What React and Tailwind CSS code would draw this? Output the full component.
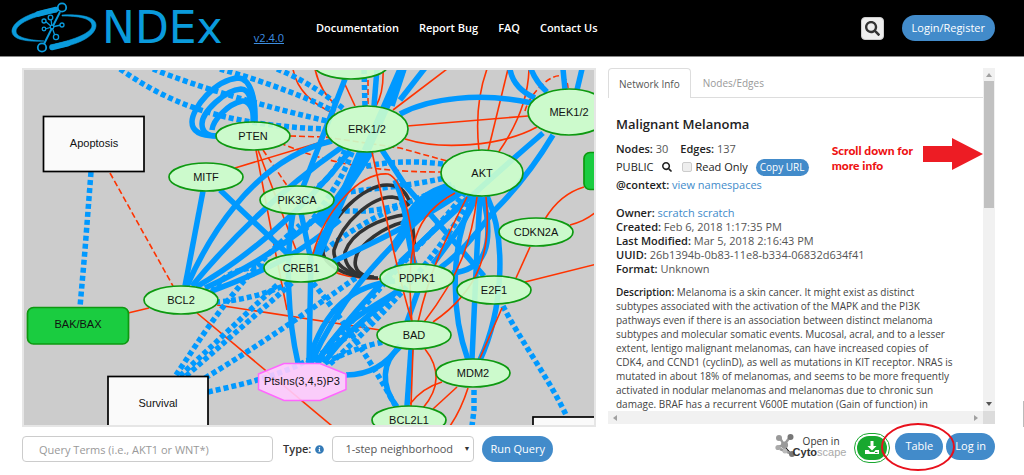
import React from "react";
import { FaSearch, FaInfoCircle } from "react-icons/fa";

const solidEdges = [
  "M255,122 C256,98 250,78 238,78 C215,80 192,108 192,122 C192,134 205,136 217,136",
  "M253,122 C254,105 250,89 241,89 C225,90 202,112 202,124 C202,133 208,136 217,136",
  "M254,122 C254,108 248,100 242,101 C228,104 213,120 212,130",
  "M203,191 L185,286",
  "M220,190 L290,256",
  "M187,286 C205,245 250,160 332,141",
  "M192,286 C230,240 280,190 342,147",
  "M196,287 C240,262 300,215 350,151",
  "M205,288 C240,272 290,245 330,205",
  "M212,291 C250,276 290,262 340,220",
  "M345,79 L303,187",
  "M374,106 L377,69",
  "M400,100 L425,68",
  "M392,106 L404,69",
  "M400,114 C430,98 480,92 532,103",
  "M510,69 Q513,88 535,98",
  "M531,69 Q536,82 547,92",
  "M563,69 L565,90",
  "M582,69 L577,90",
  "M543,133 C500,170 450,215 400,262",
  "M553,135 C535,165 515,190 495,210 C475,235 462,252 440,268",
  "M480,196 L477,250 L472,359",
  "M475,196 C450,240 450,310 468,360",
  "M487,196 C507,240 503,310 480,360",
  "M382,150 L405,185 L484,276",
  "M483,197 C495,245 485,270 452,273",
  "M332,262 C380,240 430,215 462,192",
  "M308,363 C325,305 355,285 395,281",
  "M311,363 C335,310 370,260 452,190",
  "M316,363 C345,320 400,260 470,196",
  "M324,363 C350,325 385,305 398,290",
  "M318,363 C340,318 375,308 402,288",
  "M293,213 C285,260 288,320 298,363",
  "M301,213 L311,260 L309,363",
  "M346,375 Q380,375 400,345",
  "M400,347 C382,362 380,385 397,407",
  "M418,291 L407,322",
  "M411,349 L407,406",
  "M395,180 C410,215 405,240 415,264",
  "M433,264 C455,235 470,215 476,196",
  "M340,210 C330,225 322,240 314,255",
];

const heavyEdges = [
  "M362,151 L317,256",
  "M366,151 L402,69",
  "M370,151 C352,180 335,205 318,225",
  "M456,189 C430,200 415,215 392,250",
  "M452,186 C428,192 414,204 404,226",
];

const dashedEdges = [
  "M91,172 L85,250 L80,307",
  "M120,69 C165,100 215,125 325,129",
  "M153,69 C200,88 270,108 327,121",
  "M220,69 C260,80 310,98 335,112",
  "M277,69 Q310,82 345,110",
  "M364,69 L365,106",
  "M443,164 C410,160 380,162 355,169",
  "M343,193 C370,188 400,188 445,178",
  "M337,210 C365,213 395,212 448,185",
  "M318,255 C350,230 390,205 450,188",
  "M465,192 C435,235 370,290 322,362",
  "M472,196 C442,250 390,310 330,364",
  "M345,150 C335,175 320,185 314,190",
  "M352,152 C342,180 330,195 305,230",
  "M176,375 C200,340 235,280 300,225",
  "M180,376 L278,284",
  "M186,376 L292,283",
  "M205,378 C260,345 310,310 360,275",
  "M208,392 C260,380 320,370 390,300",
  "M215,302 C250,300 275,290 290,283",
  "M212,292 C225,272 240,268 268,266",
  "M503,306 C520,340 550,380 567,417",
  "M474,390 L474,410 L472,426",
  "M313,283 C335,310 365,350 395,405",
  "M325,363 C340,355 365,345 384,342",
];

const redEdges = [
  "M235,168 L328,140",
  "M258,150 L298,255",
  "M256,150 L275,250 L287,310",
  "M293,69 Q298,98 335,114",
  "M315,69 Q320,92 337,106",
  "M342,78 L355,106",
  "M383,69 Q384,92 376,106",
  "M393,110 L447,69",
  "M407,126 L528,116",
  "M405,139 C440,150 500,147 537,127",
  "M487,69 Q474,105 479,151",
  "M508,69 L488,151",
  "M529,69 Q528,110 498,153",
  "M545,219 Q560,194 584,187",
  "M570,225 Q586,221 597,211",
  "M128,313 L149,308",
  "M217,305 L380,330",
  "M197,313 L332,426",
  "M530,247 L516,278",
  "M525,282 L597,264",
  "M335,272 Q350,279 382,279",
  "M425,349 C440,368 440,388 423,408",
  "M442,382 Q422,388 410,404",
  "M457,387 L433,409",
  "M468,388 Q461,410 450,426",
];

const redFrontEdges = [
  "M502,308 L480,358",
  "M455,193 C415,215 405,245 412,322",
  "M467,197 C445,240 430,270 418,322",
  "M477,197 C472,240 460,275 424,322",
  "M486,197 C492,250 480,290 433,322",
  "M372,152 C385,210 396,270 412,322",
  "M313,254 C325,210 360,172 388,174 C405,180 412,230 415,263",
  "M413,349 L411,406",
];

const redDashedEdges = [
  "M290,136 L325,137 L400,148 L447,161",
  "M280,143 C310,155 350,172 441,172",
  "M263,150 L288,187",
  "M525,111 C530,90 566,58 568,88",
  "M110,173 L173,286",
  "M368,80 L368,104",
];

const darkEdges = [
  "M378,278 C340,278 322,262 323,250 C330,215 365,185 387,185 C400,185 405,192 409,200",
  "M374,277 C345,276 333,262 334,250 C343,220 373,197 392,197 C402,198 406,202 409,206",
  "M370,276 C350,276 344,262 345,252 C352,232 378,218 409,214",
  "M366,276 C354,272 353,262 358,252 C370,236 390,224 412,220 L415,250",
];

const ovals = [
  ["", 351, 65, 37, 14],
  ["MITF", 206, 177, 37, 14],
  ["PTEN", 253, 136, 37, 14],
  ["PIK3CA", 297, 200, 37, 14],
  ["ERK1/2", 367, 129, 41, 23],
  ["MEK1/2", 569, 112, 41, 23],
  ["AKT", 482, 173, 41, 23],
  ["CDKN2A", 536, 232, 37, 14],
  ["BCL2", 181, 300, 37, 14],
  ["CREB1", 301, 268, 37, 14],
  ["PDPK1", 417, 278, 37, 14],
  ["E2F1", 494, 290, 37, 14],
  ["BAD", 414, 335, 37, 14],
  ["MDM2", 473, 373, 37, 14],
  ["BCL2L1", 409, 420, 37, 14],
];

function Paths({ list, ...rest }) {
  return (
    <g fill="none" {...rest}>
      {list.map((d) => (
        <path key={d} d={d} />
      ))}
    </g>
  );
}

function NetworkGraph() {
  return (
    <div className="border-2 border-[#e6e6e6] bg-[#cccccc]">
      <svg viewBox="24 70 570 355" className="block h-auto w-full" role="img" aria-label="Network graph">
        <Paths list={redEdges} stroke="#ff3300" strokeWidth="1.6" />
        <Paths list={redDashedEdges} stroke="#ff3300" strokeWidth="1.6" strokeDasharray="6 3" />
        <Paths list={dashedEdges} stroke="#0099ff" strokeWidth="5.5" strokeDasharray="5 3" />
        <Paths list={darkEdges} stroke="#333333" strokeWidth="3.6" />
        <Paths list={solidEdges} stroke="#0099ff" strokeWidth="5.5" />
        <Paths list={heavyEdges} stroke="#0099ff" strokeWidth="9" />
        <Paths list={redFrontEdges} stroke="#ff3300" strokeWidth="1.6" />
        <g fill="#fafafa" stroke="#000000" strokeWidth="1.7">
          <rect x="43.5" y="116.5" width="100.5" height="55" />
          <rect x="108" y="376.5" width="100" height="60" />
          <rect x="533" y="417" width="90" height="40" />
        </g>
        <g fill="#1acc40" stroke="#0d9910" strokeWidth="1.7">
          <rect x="27.5" y="307.5" width="101" height="36.5" rx="6" />
          <rect x="584" y="152.5" width="60" height="37" rx="6" />
        </g>
        <g fill="#ccffcc" fillOpacity="0.9" stroke="#0d9910" strokeWidth="1.7">
          {ovals.map(([name, cx, cy, rx, ry]) => (
            <ellipse key={name} cx={cx} cy={cy} rx={rx} ry={ry} />
          ))}
        </g>
        <polygon
          points="258.5,374 284,363.5 320,363.5 346,374 346,389.5 320,400.5 284,400.5 258.5,389.5"
          fill="#ffccff"
          fillOpacity="0.9"
          stroke="#ff66ff"
          strokeWidth="1.5"
        />
        <g fontFamily="Liberation Sans, Arial, sans-serif" fontSize="11" fill="#111111" textAnchor="middle">
          {ovals.slice(1).map(([name, cx, cy]) => (
            <text key={name} x={cx} y={cy + 4}>
              {name}
            </text>
          ))}
          <text x="94" y="147">Apoptosis</text>
          <text x="78" y="328">BAK/BAX</text>
          <text x="158" y="407">Survival</text>
          <text x="302" y="385">PtsIns(3,4,5)P3</text>
        </g>
      </svg>
    </div>
  );
}

function LogoMark() {
  return (
    <svg viewBox="0 0 90 54" className="h-[54px] w-[90px]" fill="none" stroke="#0a9bdc" aria-hidden="true">
      <path d="M48 7 C25 10 3 20 4 31 C5 39 20 41 36 40 C22 39 8 37 8 30 C9 21 30 14 49 11 Z" fill="#0a9bdc" stroke="#0a9bdc" strokeWidth="0.6" />
      <path d="M30 13 L48 8.5" strokeWidth="5.5" strokeLinecap="round" />
      <path d="M54 14 C70 13 89 15 88 25 C87 36 68 45 43 48 L42 44 C62 40 83 33 84 25 C84 17 70 15 54 15 Z" fill="#0a9bdc" stroke="#0a9bdc" strokeWidth="0.6" />
      <path d="M44 46.5 L60 42.5" strokeWidth="5.5" strokeLinecap="round" />
      <path d="M52 11 L36 43" strokeWidth="2" />
      <circle cx="54" cy="6.5" r="4.2" strokeWidth="1.8" fill="#000000" />
      <circle cx="34" cy="46.5" r="4.2" strokeWidth="1.8" fill="#000000" />
      <g strokeWidth="1.3">
        <path d="M44 26 L43 18 M44 26 L37 20 M44 26 L37 28 M44 26 L53 24 M44 26 L47 35" />
        <g fill="#000000">
          <circle cx="44" cy="26" r="1.8" />
          <circle cx="42.5" cy="16.5" r="2.3" />
          <circle cx="36" cy="20" r="2" />
          <circle cx="36" cy="28" r="1.8" />
          <circle cx="54" cy="24" r="2" />
          <circle cx="48" cy="36" r="2.6" />
        </g>
      </g>
    </svg>
  );
}

function Header() {
  return (
    <header className="flex h-[57px] items-center border-b border-[#888888] bg-black pr-[29px] pl-[8px] text-[11px] text-white">
      <div className="flex w-[308px] items-center">
        <LogoMark />
        <span className="pl-1 font-['DejaVu_Sans'] text-[44px] leading-[54px] text-[#0a9bdc]">NDEx</span>
        <a href="#version" className="mt-5 ml-auto mr-8 text-[11px] text-[#3d8ee0] underline">
          v2.4.0
        </a>
      </div>
      <nav className="flex gap-5 font-semibold">
        <a href="#documentation">Documentation</a>
        <a href="#report">Report Bug</a>
        <a href="#faq">FAQ</a>
        <a href="#contact">Contact Us</a>
      </nav>
      <button aria-label="Search" className="ml-auto flex size-[23px] items-center justify-center rounded-sm border border-[#cccccc] bg-[#eeeeee] text-[#333333]">
        <FaSearch className="size-[15px]" />
      </button>
      <button className="ml-[18px] h-[26px] rounded-full bg-[#428bca] px-2.5">Login/Register</button>
    </header>
  );
}

function QueryBar() {
  return (
    <form className="mt-[9px] flex h-[26px] items-center pr-[43px] text-[11px] text-[#333333]">
      <input
        aria-label="Query Terms"
        placeholder="Query Terms (i.e., AKT1 or WNT*)"
        className="h-full min-w-0 flex-1 rounded-sm border border-[#cccccc] px-4 placeholder:text-[#999999]"
      />
      <label htmlFor="type" className="mr-1 ml-[10px] font-semibold">
        Type:
      </label>
      <FaInfoCircle className="mr-2 size-[9px] text-[#337ab7]" />
      <div className="relative h-full w-[142px]">
        <select id="type" className="h-full w-full appearance-none rounded-sm border border-[#cccccc] bg-white pl-3 text-[#555555]">
          <option>1-step neighborhood</option>
        </select>
        <span className="pointer-events-none absolute top-2 right-1 text-[7px] leading-[10px] text-[#333333]">▼</span>
      </div>
      <button type="button" className="ml-2 h-full rounded-full bg-[#428bca] px-2 text-white">
        Run Query
      </button>
    </form>
  );
}

function Field({ name, children }) {
  return (
    <p>
      <strong className="font-semibold text-[#222222]">{name}</strong> {children}
    </p>
  );
}

function ScrollArrow({ d, className }) {
  return (
    <svg viewBox="0 0 6 6" className={className} fill="currentColor" aria-hidden="true">
      <path d={d} />
    </svg>
  );
}

function InfoPanel() {
  return (
    <section className="relative grid grid-cols-[1fr_12px] grid-rows-[1fr_13px]">
      <div className="overflow-hidden text-[11px] leading-[14px] text-[#555555]">
        <div role="tablist" className="flex h-[30px] border-b border-[#dddddd]">
          <button role="tab" aria-selected="true" className="h-[30px] rounded-t-sm border border-b-0 border-[#dddddd] bg-white px-2.5 text-[10px]">
            Network Info
          </button>
          <button role="tab" aria-selected="false" className="px-3 text-[10px] text-[#999999]">
            Nodes/Edges
          </button>
        </div>
        <div className="pt-4 pl-2">
          <h1 className="text-[13px] leading-[20px] font-semibold text-[#222222]">Malignant Melanoma</h1>
          <div className="mt-2 flex h-[16px] gap-3">
            <Field name="Nodes:">30</Field>
            <Field name="Edges:">137</Field>
          </div>
          <div className="flex h-[18px] items-center text-[#222222]">
            <span>PUBLIC</span>
            <FaSearch className="ml-2 size-[10px]" />
            <label className="ml-2.5 flex items-center gap-1">
              <input type="checkbox" className="size-[10px] appearance-none rounded-xs border border-[#cccccc] bg-[#eeeeee]" />
              Read Only
            </label>
            <button className="ml-2 h-[17px] rounded-full bg-[#428bca] px-1 text-[10px] leading-[17px] text-white">Copy URL</button>
          </div>
          <div className="mt-[2px]">
            <Field name="@context:">
              <a href="#namespaces" className="text-[#428bca]">view namespaces</a>
            </Field>
          </div>
          <div className="mt-[14px]">
            <Field name="Owner:">
              <a href="#owner" className="text-[#428bca]">scratch scratch</a>
            </Field>
            <Field name="Created:">Feb 6, 2018 1:17:35 PM</Field>
            <Field name="Last Modified:">Mar 5, 2018 2:16:43 PM</Field>
            <Field name="UUID:">26b1394b-0b83-11e8-b334-06832d634f41</Field>
            <Field name="Format:">Unknown</Field>
          </div>
          <div className="mt-[9px] pr-7 text-[10px] text-[#444444]">
            <Field name="Description:">
              Melanoma is a skin cancer. It might exist as distinct subtypes associated with the activation of the MAPK and the PI3K pathways even if there is an association between distinct melanoma subtypes and molecular somatic events. Mucosal, acral, and to a lesser extent, lentigo malignant melanomas, can have increased copies of CDK4, and CCND1 (cyclinD), as well as mutations in KIT receptor. NRAS is mutated in about 18% of melanomas, and seems to be more frequently activated in nodular melanomas and melanomas due to chronic sun damage. BRAF has a recurrent V600E mutation (Gain of function) in
            </Field>
          </div>
        </div>
      </div>
      <div className="flex flex-col items-center bg-[#f1f1f1] text-[#555555]">
        <div className="flex h-[13px] items-center text-[#a0a0a0]">
          <ScrollArrow d="M0 5 L3 1 L6 5 Z" className="size-[6px]" />
        </div>
        <div className="h-[127px] w-[10px] bg-[#c1c1c1]" />
        <ScrollArrow d="M0 1 L3 5 L6 1 Z" className="mt-auto mb-1 size-[6px]" />
      </div>
      <div className="flex items-center justify-between bg-[#f1f1f1] px-1 text-[#a0a0a0]">
        <ScrollArrow d="M5 0 L1 3 L5 6 Z" className="size-[6px]" />
        <ScrollArrow d="M1 0 L5 3 L1 6 Z" className="size-[6px]" />
      </div>
      <div className="bg-[#dcdcdc]" />
      <div className="absolute top-[75px] right-[12px] flex items-start gap-2.5">
        <p className="font-[Lato] text-[12px] leading-[15px] font-black text-[#ee1111]">
          Scroll down for
          <br />
          more info
        </p>
        <svg viewBox="0 0 60 32" className="mt-[-5px] h-[32px] w-[60px]" aria-hidden="true">
          <path d="M0 8 H29 V0 L60 16 L29 32 V24 H0 Z" fill="#ed1c24" />
        </svg>
      </div>
    </section>
  );
}

function CytoscapeMark() {
  return (
    <svg viewBox="0 0 22 26" className="h-[26px] w-[22px]" aria-hidden="true">
      <g stroke="#999999" strokeWidth="2.5">
        <path d="M9 12 L5 5 M9 12 L15 4 M9 12 L3 14 M9 12 L10 18 L17 21 M10 18 L5 16" />
      </g>
      <g fill="#999999">
        <circle cx="4" cy="5" r="3" />
        <circle cx="15.5" cy="4" r="3" fill="#777777" />
        <circle cx="3" cy="14.5" r="2.6" fill="#aaaaaa" />
        <circle cx="9.5" cy="12" r="3.6" />
        <circle cx="10" cy="18" r="2.5" fill="#bbbbbb" />
        <circle cx="17" cy="21" r="3" fill="#777777" />
      </g>
    </svg>
  );
}

function ActionBar() {
  return (
    <div className="mt-[9px] flex items-start justify-end text-[11px] text-white">
      <button className="flex items-start text-left text-[#333333]">
        <CytoscapeMark />
        <span className="-ml-1 flex flex-col pt-[3px] leading-[11px]">
          <span className="pl-2.5 text-[10px]">Open in</span>
          <span className="font-['Liberation_Sans'] text-[11px] text-[#aaaaaa]">
            <b className="text-[#333333]">Cyto</b>scape
          </span>
        </span>
      </button>
      <button aria-label="Download" className="ml-2 flex h-[30px] w-[36px] items-center justify-center rounded-full border border-[#18a82f] bg-white p-[2px]">
        <span className="flex h-full w-full items-center justify-center rounded-full bg-[#18a82f]">
          <svg viewBox="0 0 14 14" className="size-[14px]" fill="white" aria-hidden="true">
            <path d="M5.5 0 H8.5 V5 H11.5 L7 9.5 L2.5 5 H5.5 Z" />
            <path d="M0 9 H3.5 L5 11 H9 L10.5 9 H14 V13 H0 Z" />
            <path d="M10 11.5 H12.5" stroke="#18a82f" />
          </svg>
        </span>
      </button>
      <div className="relative ml-[5px]">
        <button className="h-[27px] rounded-full bg-[#428bca] px-2.5">Table</button>
        <svg viewBox="0 0 76 50" className="pointer-events-none absolute -top-[11px] -left-[15px] z-10 h-[50px] w-[76px] max-w-none" aria-hidden="true">
          <ellipse cx="38" cy="25" rx="36" ry="23" fill="none" stroke="#e8101c" strokeWidth="2" />
        </svg>
      </div>
      <button className="ml-[3px] h-[27px] rounded-full bg-[#428bca] px-[9px]">Log in</button>
    </div>
  );
}

export default function App() {
  return (
    <div className="relative overflow-hidden bg-white pb-2 font-['Open_Sans',sans-serif]">
      <Header />
      <main className="flex gap-3 pt-[11px] pr-[29px] pl-[22px]">
        <div className="min-w-0 flex-[574]">
          <NetworkGraph />
          <QueryBar />
        </div>
        <div className="min-w-0 flex-[387]">
          <InfoPanel />
          <ActionBar />
        </div>
      </main>
      <div className="absolute top-[401px] right-0 h-[26px] w-px bg-[#bbbbbb]" />
    </div>
  );
}
